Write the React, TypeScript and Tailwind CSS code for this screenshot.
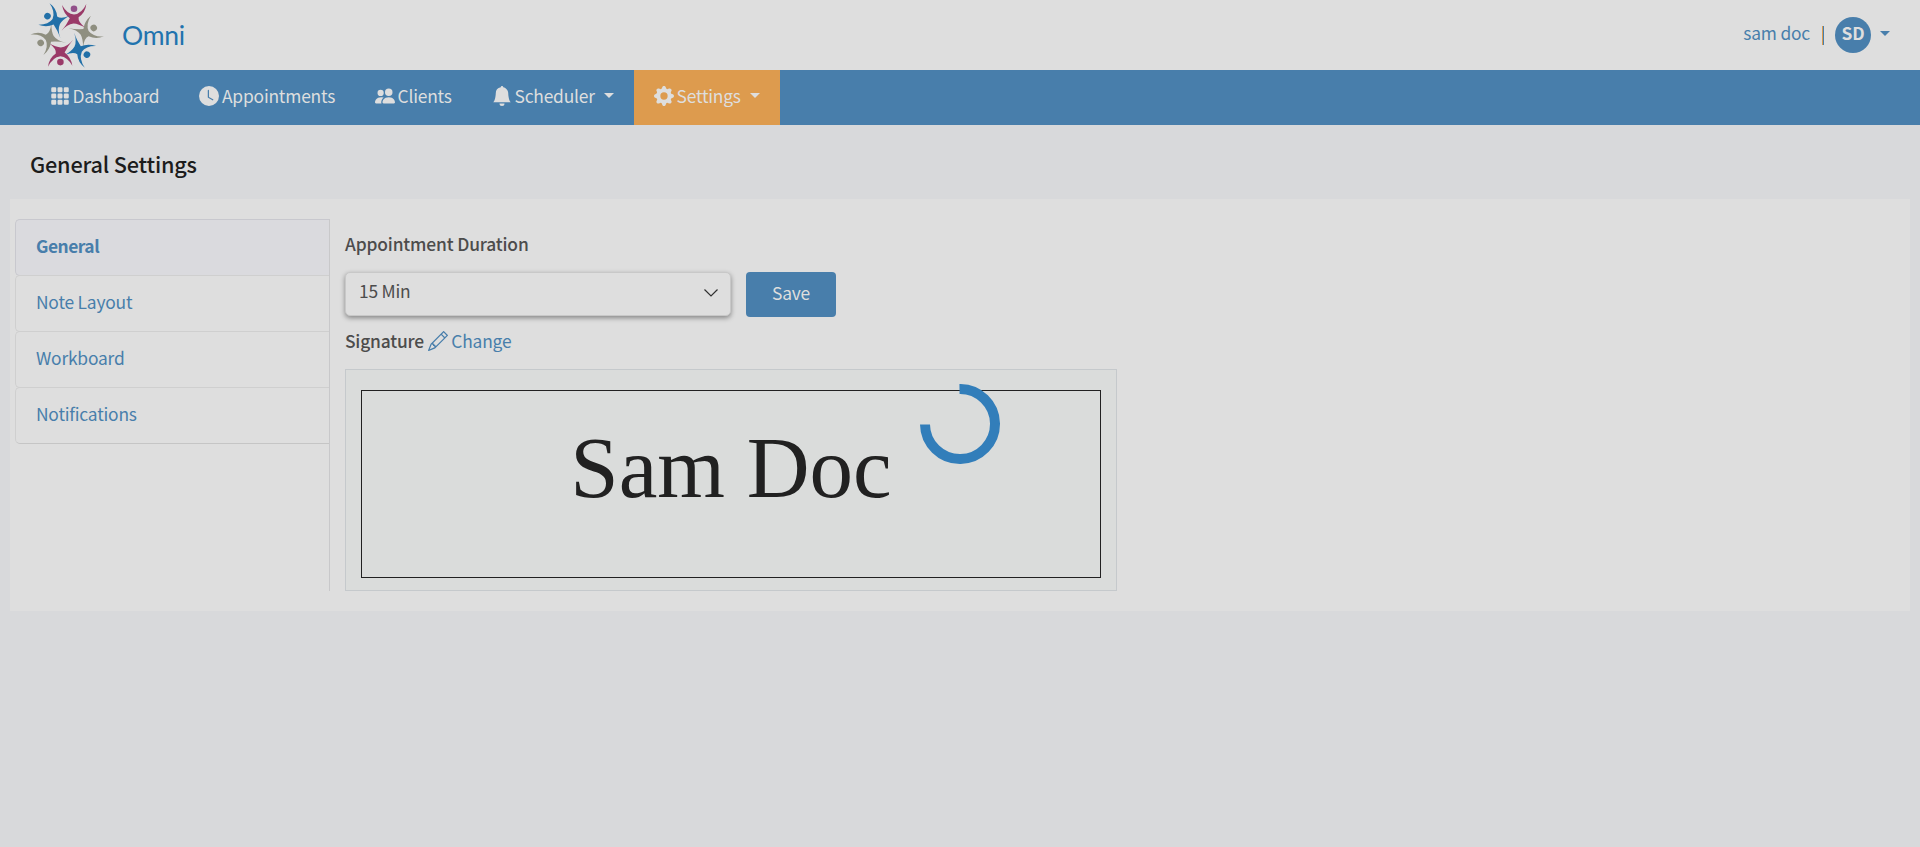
import React from "react";
import { BsGrid3X3GapFill, BsClockFill, BsPeopleFill, BsBellFill, BsGearFill, BsPencil } from "react-icons/bs";

const BLUE = "#2270a8";
const MAGENTA = "#9a3a68";
const GREY = "#8f8f80";

function Figure({ angle, color, head }: { angle: number; color: string; head: string }) {
  return (
    <g transform={`rotate(${angle} 37.2 35.4)`}>
      <circle cx="44" cy="8.7" r="3.3" fill={head} />
      <path
        fill={color}
        d="M32 5 Q37 14 44 14.6 Q52 13.5 56.3 4 Q55.5 12.5 48.6 17.2 Q47.8 22 55.3 27.5 Q48.5 23.6 43.5 23.4 Q37 24 31.5 30.8 Q36.8 24.5 39.8 18.2 Q33.5 13.5 32 5 Z"
      />
    </g>
  );
}

function Logo() {
  return (
    <svg width="76" height="70" viewBox="0 0 76 70">
      <Figure angle={0} color={MAGENTA} head="#92508a" />
      <Figure angle={60} color={GREY} head={GREY} />
      <Figure angle={120} color={BLUE} head={BLUE} />
      <Figure angle={180} color={MAGENTA} head={MAGENTA} />
      <Figure angle={240} color={GREY} head={GREY} />
      <Figure angle={300} color={BLUE} head={BLUE} />
    </svg>
  );
}

function Caret({ className = "" }: { className?: string }) {
  return (
    <svg className={className} width="10" height="5" viewBox="0 0 10 5" fill="currentColor">
      <path d="M0 0H10L5 5Z" />
    </svg>
  );
}

const navItems = [
  { label: "Dashboard", Icon: BsGrid3X3GapFill, width: "w-[149.5px]", caret: false, active: false },
  { label: "Appointments", Icon: BsClockFill, width: "w-[175.5px]", caret: false, active: false },
  { label: "Clients", Icon: BsPeopleFill, width: "w-[117px]", caret: false, active: false },
  { label: "Scheduler", Icon: BsBellFill, width: "w-[162px]", caret: true, active: false },
  { label: "Settings", Icon: BsGearFill, width: "w-[146px]", caret: true, active: true },
];

const tabs = ["General", "Note Layout", "Workboard", "Notifications"];

export default function App() {
  return (
    <div className="relative h-[847px] w-full overflow-hidden bg-[#d8d9db] font-['Noto_Sans_CJK_SC',sans-serif] text-[17.4px] leading-[30px] tracking-[-0.2px] text-[#4c4c4c]">
      <header className="flex h-[70px] items-center justify-between bg-[#dedede] pr-[30px] pl-[30px]">
        <div className="flex items-center">
          <Logo />
          <span className="ml-4 font-['Lato',sans-serif] text-[26.5px] tracking-[-0.3px] text-[#2173ae]">Omni</span>
        </div>
        <div className="flex items-center text-[#487eab]">
          <span className="pb-[5px]">sam doc</span>
          <span className="ml-3 h-[19px] w-[2px] border-l border-[#dd9b4e] bg-[#487eab]" />
          <span className="ml-[11px] flex size-9 items-center justify-center rounded-full bg-[#487eab] pb-[4px] font-bold text-[#dedede]">SD</span>
          <Caret className="mb-[3px] ml-[9px]" />
        </div>
      </header>

      <nav className="flex h-[55px] bg-[#487eab] pl-[30px] text-[#dedede]">
        {navItems.map(({ label, Icon, width, caret, active }) => (
          <a key={label} className={`flex items-center pb-[3px] pl-[19.5px] whitespace-nowrap ${width} ${active ? "bg-[#dd9b4e]" : ""}`}>
            <Icon size={20} className="mr-[3px] mb-px shrink-0" />
            <span>{label}</span>
            {caret && <Caret className="mb-px ml-[9px]" />}
          </a>
        ))}
      </nav>

      <h1 className="flex h-[74px] items-center pt-[3px] pl-[30px] text-[21.7px] font-medium text-[#1c1c1c]">General Settings</h1>

      <main className="mx-[10px] flex h-[412px] bg-[#dedede] pt-5 pl-[5px]">
        <ul className="h-[372px] w-[315px] border-r border-[#c8c8ca]">
          {tabs.map((tab, i) => (
            <li
              key={tab}
              className={
                i === 0
                  ? "flex h-[57px] items-center rounded-l-[5px] border border-r-0 border-[#c8c8ce] bg-[#dadade] pb-[3px] pl-5 font-bold tracking-[-0.5px] text-[#487eab]"
                  : "-mt-px flex h-[57px] items-center rounded-l-[5px] border border-r-0 border-[#cfcfcf] pb-[3px] pl-5 text-[#487eab] last:border-b-[#c5c5c5]"
              }
            >
              {tab}
            </li>
          ))}
        </ul>

        <section className="ml-[15px] w-[772px]">
          <label className="mt-2.5 block h-[43px] font-medium tracking-[-0.16px]">Appointment Duration</label>
          <div className="flex">
            <div className="flex h-[44px] w-[386px] items-center justify-between rounded-[5px] border border-[#c8c8c8] bg-[#dedede] pr-3 pb-1 pl-[13px] shadow-[0_2px_5px_rgba(0,0,0,0.4)]">
              <span className="pb-0.5">15 Min</span>
              <svg className="mt-[2px]" width="14" height="8" viewBox="0 0 14 8" fill="none" stroke="#303030" strokeWidth="1.2">
                <path d="M0.5 0.5L7 7L13.5 0.5" />
              </svg>
            </div>
            <button className="ml-[15px] h-[45px] w-[90px] rounded-[4px] bg-[#487eab] pb-1 text-[#dedede]">Save</button>
          </div>
          <div className="mt-[9px] flex h-[30px] items-center">
            <span className="font-medium">Signature</span>
            <BsPencil size={20} className="ml-1 text-[#487eab]" />
            <span className="ml-[3.5px] text-[#487eab]">Change</span>
          </div>
          <div className="mt-[13px] h-[222px] w-[772px] border border-[#c5c9cc] bg-[#dadcdb] px-[15px] pt-5">
            <div className="flex h-[188px] w-[740px] justify-center border border-[#212121] pt-[27px] font-['Liberation_Serif',serif] text-[87px] leading-[100px] tracking-normal text-[#212121]">
              Sam Doc
            </div>
          </div>
        </section>
      </main>

      <svg className="absolute top-[384px] left-[920px]" width="80" height="80" viewBox="0 0 80 80" fill="none" stroke="#327eba" strokeWidth="10">
        <path d="M39.5 5A35 35 0 1 1 5 40.5" />
      </svg>
    </div>
  );
}
